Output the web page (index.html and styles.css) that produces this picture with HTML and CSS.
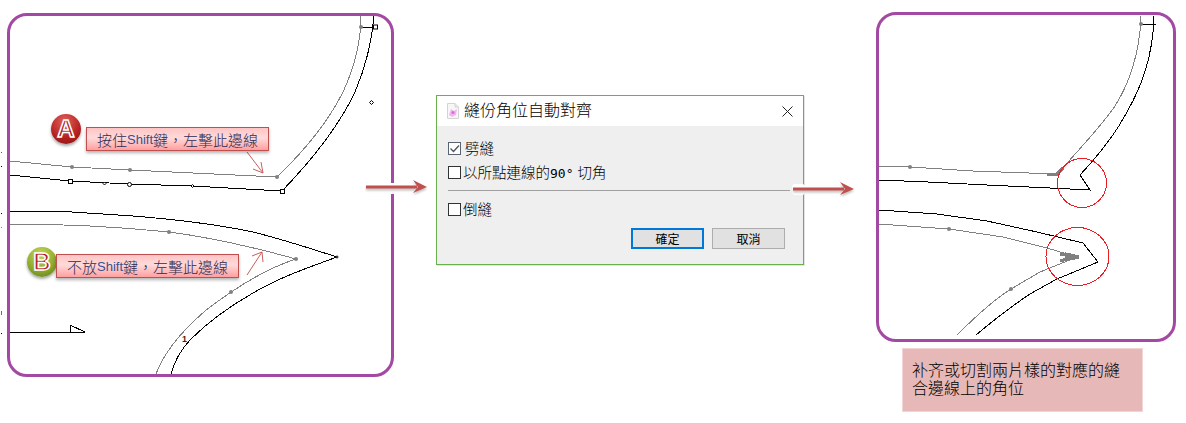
FILE: index.html
```html
<!DOCTYPE html>
<html lang="zh-Hant">
<head>
    <meta charset="UTF-8">
    <title>縫份角位自動對齊</title>
    <link rel="stylesheet" href="styles.css">
</head>
<body>
    <div class="sheet">
        <svg class="ticks" width="4" height="423" viewBox="0 0 4 423">
            <rect x="1" y="152" width="1" height="1" fill="#555"/>
            <rect x="1" y="166" width="1" height="1" fill="#000"/>
            <rect x="1" y="213" width="1" height="1" fill="#000"/>
            <rect x="1" y="227" width="1" height="1" fill="#888"/>
            <rect x="1" y="311" width="1" height="4" fill="#2a7fc0"/>
            <rect x="1" y="333" width="1" height="1" fill="#000"/>
        </svg>

        <!-- before -->
        <div class="panel panel-before">
            <svg class="pattern" width="381" height="358" viewBox="10 16 381 358">
                <g class="seam">
                    <path d="M10 161 L72 167 L130 170 L277 177 C300 155 325 128 343 92 C355 66 361 40 361 16"/>
                    <path d="M10 224 C50 224 110 226 169 232 C215 238 260 249 296 259 C262 270 232 290 205 311 C182 331 164 352 156 374"/>
                </g>
                <g class="outline">
                    <path d="M10 175 L70 181 L129 184 L192 186 L282 191 C310 162 338 128 355 92 C366 66 372 40 374 16"/>
                    <path d="M361 27 H375"/>
                    <path d="M10 211 H40 L72 212 L133 216 C170 219 215 224 253 232 C285 240 312 249 337 257 C310 267 280 277 253 293 C225 309 205 325 190 340 C180 351 174 362 171 374"/>
                    <path d="M10 332 H85 L70 325 V332"/>
                </g>
                <g class="dots">
                    <circle cx="72" cy="167" r="2"/>
                    <circle cx="130" cy="170" r="2"/>
                    <circle cx="277" cy="177" r="2"/>
                    <circle cx="361" cy="27" r="2"/>
                    <circle cx="169" cy="232" r="2"/>
                    <circle cx="296" cy="259" r="2"/>
                    <circle cx="231" cy="292" r="2"/>
                </g>
                <g class="marks">
                    <rect x="373.5" y="25" width="4" height="4"/>
                    <rect x="68.5" y="179.5" width="4" height="4"/>
                    <rect x="280.5" y="189.5" width="4" height="4"/>
                    <circle cx="129.5" cy="184.5" r="2"/>
                    <path d="M104.5 182 L106 183.5 L104.5 185 L103 183.5 Z"/>
                    <path d="M192.5 184.5 L194 186 L192.5 187.5 L191 186 Z"/>
                    <path d="M371.5 100.5 L373.5 102.5 L371.5 104.5 L369.5 102.5 Z"/>
                    <circle cx="337" cy="257" r="1" fill="#000"/>
                </g>
                <text class="piece-no" x="182" y="342">1</text>
                <path class="pointer" d="M247 152 L263 173 M263 173 L253 169 M263 173 L261 162"/>
                <path class="pointer" d="M247 275 L262 252 M262 252 L252 256 M262 252 L263 262"/>
            </svg>
            <span class="badge badge-a">A</span>
            <div class="callout callout-a">按住<span class="latin">Shift</span>鍵，左擊此邊線</div>
            <span class="badge badge-b">B</span>
            <div class="callout callout-b">不放<span class="latin">Shift</span>鍵，左擊此邊線</div>
        </div>

        <!-- dialog -->
        <div class="dialog">
            <div class="dialog-title">
                <svg class="doc-icon" width="12" height="16" viewBox="0 0 12 16">
                    <path d="M0.5 0.5 H8 L11.5 4 V15.5 H0.5 Z" fill="#f7f7f7" stroke="#d4d4d4"/>
                    <path d="M8 0.5 V4 H11.5" fill="#e8e8e8" stroke="#d4d4d4"/>
                    <path d="M2 12 L4 6 L7 8 L10 6 L9 12 L5 14 Z" fill="#f3b4ee"/>
                    <circle cx="6" cy="9.5" r="1.5" fill="#d56bdc"/>
                </svg>
                <span class="dialog-name">縫份角位自動對齊</span>
                <svg class="close-icon" width="11" height="11" viewBox="0 0 11 11">
                    <path d="M0.5 0.5 L10.5 10.5 M10.5 0.5 L0.5 10.5" stroke="#222" fill="none"/>
                </svg>
            </div>
            <div class="dialog-body">
                <div class="option option-wide">
                    <span class="check">
                        <svg width="11" height="11" viewBox="0 0 11 11">
                            <path d="M1.5 5.5 L4.5 8.5 L10 2.5" stroke="#4a5560" stroke-width="1.3" fill="none"/>
                        </svg>
                    </span>
                    <span class="option-text">劈縫</span>
                </div>
                <div class="option">
                    <span class="check"></span>
                    <span class="option-text">以所點連線的<span class="num">90°</span> 切角</span>
                </div>
                <div class="rule"></div>
                <div class="option">
                    <span class="check"></span>
                    <span class="option-text">倒縫</span>
                </div>
                <div class="buttons">
                    <button class="btn btn-default">確定</button>
                    <button class="btn">取消</button>
                </div>
            </div>
        </div>

        <!-- after -->
        <div class="after-col">
            <div class="panel panel-after">
                <svg class="pattern" width="294" height="324" viewBox="879 16 294 324">
                    <g class="seam">
                        <path d="M879 167 L910 168 L973 172 L1057 175 C1080 150 1100 128 1113 110 C1128 88 1140 55 1141 17"/>
                        <path d="M879 225 L949 230 L1003 238 L1047 249 L1077 258 L1040 273 L1011 290 C995 300 975 318 957 336"/>
                        <path class="seam-thick" d="M1047 175 H1057 L1063 169"/>
                        <path class="seam-thick" d="M1060 255 L1074 258 L1060 262"/>
                        <path class="seam-thick" d="M1066 255 L1079 258 L1066 261 Z"/>
                    </g>
                    <g class="outline">
                        <path d="M879 181 L928 183 L987 186 L1050 189 L1090 191 L1080 176 L1090 165 C1105 148 1118 130 1127 113 C1140 90 1153 60 1154 17"/>
                        <path d="M1141 25 H1156"/>
                        <path d="M879 211 L937 215 L987 222 L1037 233 L1083 244 L1098 263 L1057 280 L1030 295 C1012 307 995 320 976 336"/>
                    </g>
                    <g class="dots">
                        <circle cx="910" cy="168" r="2"/>
                        <circle cx="949" cy="230" r="2"/>
                        <circle cx="1011" cy="290" r="2"/>
                        <circle cx="1141" cy="25" r="2"/>
                    </g>
                    <circle class="ring" cx="1082" cy="184" r="24.5"/>
                    <ellipse class="ring" cx="1077.5" cy="257.5" rx="31.5" ry="29"/>
                </svg>
            </div>
            <div class="note">补齐或切割兩片樣的對應的縫合邊線上的角位</div>
        </div>

        <svg class="arrow arrow-one" width="64" height="16" viewBox="0 0 64 16">
            <rect x="24" y="4" width="7" height="11" fill="#fff"/>
            <g class="arrow-shape">
                <path d="M1 8 H52" stroke="#c0504d" stroke-width="3" fill="none"/>
                <path d="M62 8 L48 1 L53 8 L48 14 Z" fill="#c0504d"/>
            </g>
        </svg>
        <svg class="arrow arrow-two" width="64" height="16" viewBox="0 0 64 16">
            <rect x="0" y="3" width="13" height="11" rx="3" fill="#fff"/>
            <g class="arrow-shape">
                <path d="M1 8 H52" stroke="#c0504d" stroke-width="3" fill="none"/>
                <path d="M62 8 L48 1 L53 8 L48 14 Z" fill="#c0504d"/>
            </g>
        </svg>
    </div>
</body>
</html>
```

FILE: styles.css
```css
* {
    box-sizing: border-box;
}

body {
    margin: 0;
    background-color: #fff;
    font-family: "Liberation Sans", "Noto Sans CJK TC", sans-serif;
    font-weight: 300;
    color: #000;
}

.sheet {
    position: relative;
    display: flex;
    align-items: flex-start;
    width: 1186px;
    height: 423px;
    overflow: hidden;
}

.ticks {
    position: absolute;
    left: 0;
    top: 0;
}

/* purple framed panels */
.panel {
    position: relative;
    border: 3px solid #a349a4;
    border-radius: 20px;
    background-color: #fff;
}

.panel-before {
    flex: none;
    width: 387px;
    height: 364px;
    margin: 13px 0 0 7px;
}

.panel-after {
    width: 300px;
    height: 330px;
}

.pattern {
    display: block;
    border-radius: 17px;
}

.seam path,
.outline path {
    fill: none;
    stroke-width: 1;
    shape-rendering: crispEdges;
}

.seam path {
    stroke: #808080;
}

.seam .seam-thick {
    stroke-width: 3;
}

.outline path {
    stroke: #000;
}

.dots circle {
    fill: #808080;
}

.marks rect,
.marks circle,
.marks path {
    fill: #fff;
    stroke: #000;
    stroke-width: 1;
}

.piece-no {
    font-size: 9px;
    font-weight: bold;
    fill: #5a1a00;
}

.pointer {
    fill: none;
    stroke: #c8605c;
    stroke-width: 1;
}

.ring {
    fill: none;
    stroke: #ee1c25;
    stroke-width: 1;
    shape-rendering: crispEdges;
}

/* pink callouts */
.callout {
    position: absolute;
    display: flex;
    align-items: center;
    justify-content: center;
    width: 183px;
    height: 24px;
    border: 1px solid #c0504d;
    background: linear-gradient(#ffc4c4, #ffdada 45%, #ff9f9f);
    box-shadow: 0 2px 3px rgba(0, 0, 0, 0.3);
    font-size: 15px;
    color: #2f2b52;
    white-space: nowrap;
}

.callout .latin {
    color: #35508f;
    font-size: 13px;
    font-weight: 400;
}

.callout-a {
    left: 76px;
    top: 111px;
}

.callout-b {
    left: 46px;
    top: 238px;
}

.badge {
    position: absolute;
    display: flex;
    align-items: center;
    justify-content: center;
    width: 30px;
    height: 30px;
    border-radius: 50%;
    font-size: 24px;
    font-weight: bold;
    box-shadow: 0 2px 3px rgba(0, 0, 0, 0.35);
    -webkit-text-stroke: 1.5px #fff;
}

.badge-a {
    left: 41px;
    top: 98px;
    background: radial-gradient(circle at 45% 25%, #e0605a, #b3201f 60%, #7d1413);
    color: #a61c1c;
}

.badge-b {
    left: 17px;
    top: 231px;
    background: radial-gradient(circle at 45% 25%, #c4d858, #8aa62c 60%, #5c7a18);
    color: #b01c24;
}

/* dialog */
.dialog {
    flex: none;
    width: 368px;
    height: 170px;
    margin: 95px 0 0 42px;
    border: 1px solid #6ab04c;
    background-color: #efefef;
    box-shadow: 1px 1px 0 #e4e4e4;
}

.dialog-title {
    display: flex;
    align-items: center;
    height: 30px;
    padding: 0 10px;
    background-color: #fff;
}

.doc-icon {
    flex: none;
}

.dialog-name {
    margin-left: 5px;
    font-size: 16px;
    line-height: 30px;
}

.close-icon {
    margin-left: auto;
}

.dialog-body {
    padding: 14px 18px 0 11px;
    font-size: 14.5px;
}

.option {
    display: flex;
    align-items: center;
    gap: 2px;
    height: 16px;
    margin-bottom: 8px;
}

.option-wide {
    gap: 4px;
}

.option-text {
    margin-top: -2px;
}

.num {
    font-family: "DejaVu Sans Mono", monospace;
    font-size: 13px;
    font-weight: 400;
}

.check {
    display: flex;
    align-items: center;
    justify-content: center;
    width: 13px;
    height: 13px;
    border: 1px solid #333;
    background-color: #fff;
}

.option-wide .check {
    border-color: #5a6470;
}

.rule {
    height: 1px;
    margin: 10px -5px 10px 0;
    background-color: #a0a0a0;
}

.buttons {
    display: flex;
    justify-content: flex-end;
    gap: 8px;
    margin-top: 11px;
}

.btn {
    width: 73px;
    height: 21px;
    padding: 0;
    border: 1px solid #adadad;
    border-radius: 0;
    background-color: #e1e1e1;
    font-family: inherit;
    font-weight: 400;
    font-size: 12px;
    color: #000;
}

.btn-default {
    border: 2px solid #0078d7;
}

/* right column */
.after-col {
    flex: none;
    width: 300px;
    margin: 12px 0 0 72px;
}

.note {
    width: 241px;
    height: 64px;
    margin: 6px 0 0 26px;
    padding: 13px 20px 0 9px;
    border: 1px solid #f0d5d4;
    background-color: #e6b8b7;
    font-size: 16px;
    line-height: 18px;
}

/* the two big arrows lie over the panels */
.arrow {
    position: absolute;
}

.arrow-shape {
    filter: drop-shadow(0 2px 1px rgba(0, 0, 0, 0.25));
}

.arrow-one {
    left: 365px;
    top: 179px;
}

.arrow-two {
    left: 792px;
    top: 181px;
}
```
